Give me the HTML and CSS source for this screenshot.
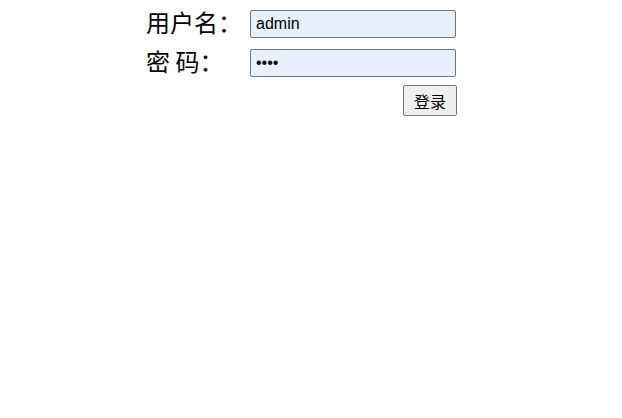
FILE: index.html
```html
<!DOCTYPE html>
<html>
<head>
<meta charset="utf-8">
<link rel="stylesheet" href="styles.css">
</head>
<body>
<form class="login">
  <label class="label">用户名：</label>
  <input class="field" type="text" value="admin">
  <label class="label">密 码：</label>
  <input class="field" type="password" value="1234">
  <span></span>
  <div class="actions"><button class="btn" type="button">登录</button></div>
</form>
</body>
</html>
```
FILE: styles.css
```css
body {
  margin: 8px;
  background: #fff;
  font-family: "Liberation Sans", "Noto Sans CJK SC", sans-serif;
}
.login {
  display: grid;
  grid-template-columns: 104px 206px;
  grid-auto-rows: auto;
  row-gap: 11px;
  align-items: center;
  margin: 2px 0 0 138px;
}
.label {
  font-family: "Noto Sans CJK SC", sans-serif;
  font-size: 24px;
  line-height: 28px;
  color: #000;
  margin-top: -4px;
}
.field {
  box-sizing: border-box;
  width: 206px;
  height: 28px;
  margin: 0;
  padding: 1px 5px;
  border: 1px solid #767676;
  border-radius: 2px;
  background: #e8f0fe;
  font-family: "Liberation Sans", sans-serif;
  font-size: 16px;
  color: #000;
}
.actions {
  display: flex;
  justify-content: flex-end;
  margin-top: -3px;
  margin-right: -1px;
}
.btn {
  box-sizing: border-box;
  width: 54px;
  height: 31px;
  padding: 0;
  border: 1px solid #767676;
  border-radius: 2px;
  background: #efefef;
  font-family: "Noto Sans CJK SC", sans-serif;
  font-size: 16px;
  color: #000;
}
```
